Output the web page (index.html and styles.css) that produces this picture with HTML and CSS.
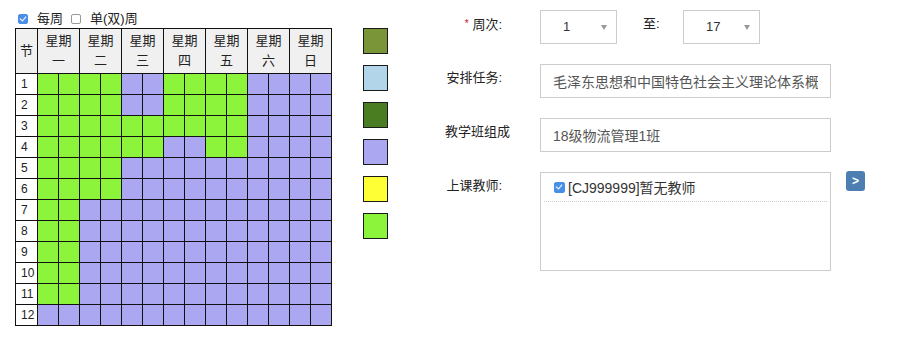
FILE: index.html
```html
<!DOCTYPE html>
<html lang="zh-CN">
<head>
    <meta charset="UTF-8">
    <title>排课</title>
    <link rel="stylesheet" href="styles.css">
</head>
<body>
<div class="page">
    <!-- 课表 -->
    <div class="left">
        <div class="week-opts">
            <span class="chk on"></span><span class="opt">每周</span>
            <span class="chk"></span><span class="opt">单(双)周</span>
        </div>
        <div class="grid">
            <div class="hd jie">节</div>
            <div class="hd day">星期<br>一</div>
            <div class="hd day">星期<br>二</div>
            <div class="hd day">星期<br>三</div>
            <div class="hd day">星期<br>四</div>
            <div class="hd day">星期<br>五</div>
            <div class="hd day">星期<br>六</div>
            <div class="hd day">星期<br>日</div>

            <div class="n">1</div><div class="g"></div><div class="g"></div><div class="g"></div><div class="g"></div><div class="p"></div><div class="p"></div><div class="g"></div><div class="g"></div><div class="g"></div><div class="g"></div><div class="p"></div><div class="p"></div><div class="p"></div><div class="p"></div>
            <div class="n">2</div><div class="g"></div><div class="g"></div><div class="g"></div><div class="g"></div><div class="p"></div><div class="p"></div><div class="g"></div><div class="g"></div><div class="g"></div><div class="g"></div><div class="p"></div><div class="p"></div><div class="p"></div><div class="p"></div>
            <div class="n">3</div><div class="g"></div><div class="g"></div><div class="g"></div><div class="g"></div><div class="g"></div><div class="g"></div><div class="g"></div><div class="g"></div><div class="g"></div><div class="g"></div><div class="p"></div><div class="p"></div><div class="p"></div><div class="p"></div>
            <div class="n">4</div><div class="g"></div><div class="g"></div><div class="g"></div><div class="g"></div><div class="g"></div><div class="g"></div><div class="p"></div><div class="p"></div><div class="g"></div><div class="g"></div><div class="p"></div><div class="p"></div><div class="p"></div><div class="p"></div>
            <div class="n">5</div><div class="g"></div><div class="g"></div><div class="g"></div><div class="g"></div><div class="p"></div><div class="p"></div><div class="p"></div><div class="p"></div><div class="p"></div><div class="p"></div><div class="p"></div><div class="p"></div><div class="p"></div><div class="p"></div>
            <div class="n">6</div><div class="g"></div><div class="g"></div><div class="g"></div><div class="g"></div><div class="p"></div><div class="p"></div><div class="p"></div><div class="p"></div><div class="p"></div><div class="p"></div><div class="p"></div><div class="p"></div><div class="p"></div><div class="p"></div>
            <div class="n">7</div><div class="g"></div><div class="g"></div><div class="p"></div><div class="p"></div><div class="p"></div><div class="p"></div><div class="p"></div><div class="p"></div><div class="p"></div><div class="p"></div><div class="p"></div><div class="p"></div><div class="p"></div><div class="p"></div>
            <div class="n">8</div><div class="g"></div><div class="g"></div><div class="p"></div><div class="p"></div><div class="p"></div><div class="p"></div><div class="p"></div><div class="p"></div><div class="p"></div><div class="p"></div><div class="p"></div><div class="p"></div><div class="p"></div><div class="p"></div>
            <div class="n">9</div><div class="g"></div><div class="g"></div><div class="p"></div><div class="p"></div><div class="p"></div><div class="p"></div><div class="p"></div><div class="p"></div><div class="p"></div><div class="p"></div><div class="p"></div><div class="p"></div><div class="p"></div><div class="p"></div>
            <div class="n">10</div><div class="g"></div><div class="g"></div><div class="p"></div><div class="p"></div><div class="p"></div><div class="p"></div><div class="p"></div><div class="p"></div><div class="p"></div><div class="p"></div><div class="p"></div><div class="p"></div><div class="p"></div><div class="p"></div>
            <div class="n">11</div><div class="g"></div><div class="g"></div><div class="p"></div><div class="p"></div><div class="p"></div><div class="p"></div><div class="p"></div><div class="p"></div><div class="p"></div><div class="p"></div><div class="p"></div><div class="p"></div><div class="p"></div><div class="p"></div>
            <div class="n">12</div><div class="p"></div><div class="p"></div><div class="p"></div><div class="p"></div><div class="p"></div><div class="p"></div><div class="p"></div><div class="p"></div><div class="p"></div><div class="p"></div><div class="p"></div><div class="p"></div><div class="p"></div><div class="p"></div>
        </div>
    </div>

    <!-- 图例 -->
    <div class="legend">
        <div class="sw olive"></div>
        <div class="sw sky"></div>
        <div class="sw forest"></div>
        <div class="sw lav"></div>
        <div class="sw yellow"></div>
        <div class="sw lime"></div>
    </div>

    <!-- 表单 -->
    <div class="form">
        <div class="row">
            <label class="lbl"><span class="req">*</span> 周次:</label>
            <div class="ctrl weeks">
                <div class="select"><span>1</span></div>
                <span class="to">至:</span>
                <div class="select"><span>17</span></div>
            </div>
        </div>
        <div class="row">
            <label class="lbl">安排任务:</label>
            <input class="ctrl input" type="text" value="毛泽东思想和中国特色社会主义理论体系概论" readonly>
        </div>
        <div class="row">
            <label class="lbl">教学班组成</label>
            <input class="ctrl input" type="text" value="18级物流管理1班" readonly>
        </div>
        <div class="row">
            <label class="lbl">上课教师:</label>
            <div class="ctrl teachers">
                <div class="teacher"><span class="chk on"></span>[CJ999999]暂无教师</div>
            </div>
            <button class="add" type="button">&gt;</button>
        </div>
    </div>
</div>
</body>
</html>
```

FILE: styles.css
```css
body {
    margin: 0;
    font-family: "Helvetica Neue", Helvetica, "Liberation Sans", Arial, "Noto Sans CJK SC", sans-serif;
    font-size: 13px;
    color: #333;
    background-color: #fff;
}
.page {
    display: flex;
    align-items: flex-start;
}

/* checkboxes */
.chk {
    display: inline-block;
    box-sizing: border-box;
    width: 10px;
    height: 10px;
    border: 1px solid #999;
    border-radius: 2px;
    background-color: #fff;
    position: relative;
}
.chk.on {
    border-color: #4a8fe7;
    background-color: #4a8fe7;
}
.chk.on::after {
    content: "";
    position: absolute;
    left: 2px;
    top: 0px;
    width: 3px;
    height: 5px;
    border: solid #fff;
    border-width: 0 1.5px 1.5px 0;
    transform: rotate(40deg);
}

/* left part */
.left {
    padding: 10px 0 0 15px;
}
.week-opts {
    height: 18px;
    display: flex;
    align-items: center;
    padding-left: 3px;
    color: #222;
}
.week-opts .opt {
    margin: 0 8px 0 9px;
    line-height: 18px;
}

.grid {
    display: grid;
    grid-template-columns: 21px repeat(14, 20px);
    grid-template-rows: 44px repeat(12, 20px);
    gap: 1px;
    padding: 1px;
    background-color: #111;
    width: max-content;
}
.hd {
    background-color: #f0f0f0;
    display: flex;
    align-items: center;
    justify-content: center;
    text-align: center;
    line-height: 20px;
    color: #222;
}
.hd.day {
    grid-column: span 2;
}
.n {
    background-color: #fff;
    line-height: 20px;
    padding-left: 5px;
    color: #222;
    font-size: 12px;
    font-family: "Liberation Sans", Arial, sans-serif;
    overflow: hidden;
}
.g {
    background-color: #8cf53b;
}
.p {
    background-color: #aba7f1;
}

/* legend */
.legend {
    margin-left: 31px;
    padding-top: 28px;
    display: flex;
    flex-direction: column;
    gap: 11px;
}
.sw {
    box-sizing: border-box;
    width: 25px;
    height: 26px;
    border: 1px solid #1a1a1a;
}
.olive { background-color: #7a9537; }
.sky { background-color: #b3d5ea; }
.forest { background-color: #4a7d21; }
.lav { background-color: #aba7f1; }
.yellow { background-color: #ffff36; }
.lime { background-color: #8cf53b; }

/* form */
.form {
    margin-left: 57px;
    padding-top: 10px;
    display: flex;
    flex-direction: column;
    gap: 20px;
}
.row {
    display: flex;
    align-items: flex-start;
}
.lbl {
    width: 57px;
    margin-right: 38px;
    text-align: right;
    white-space: nowrap;
    line-height: 20px;
    padding-top: 4px;
    color: #222;
}
.req {
    color: #c8102e;
    font-size: 10px;
    vertical-align: 2px;
}
.weeks {
    display: flex;
    align-items: flex-start;
}
.select {
    box-sizing: border-box;
    width: 77px;
    height: 34px;
    border: 1px solid #ccc;
    padding-left: 22px;
    line-height: 32px;
    font-size: 13px;
    color: #333;
    position: relative;
}
.select::after {
    content: "";
    position: absolute;
    right: 9px;
    top: 14px;
    border-left: 3.5px solid transparent;
    border-right: 3.5px solid transparent;
    border-top: 5px solid #999;
}
.to {
    width: 22px;
    margin: 0 18px 0 26px;
    line-height: 20px;
    padding-top: 4px;
    color: #222;
}
.input {
    box-sizing: border-box;
    width: 291px;
    height: 34px;
    border: 1px solid #ccc;
    padding: 0 12px;
    font-family: inherit;
    font-size: 14px;
    color: #555;
    outline: none;
    margin: 0;
    background: #fff;
}
.teachers {
    box-sizing: border-box;
    width: 291px;
    height: 99px;
    border: 1px solid #ccc;
    padding: 0 3px;
}
.teacher {
    display: flex;
    align-items: center;
    height: 28px;
    padding-left: 10px;
    border-bottom: 1px dotted #ccc;
    font-size: 14px;
    color: #333;
}
.teacher .chk {
    width: 11px;
    height: 11px;
    margin-right: 3px;
}
.add {
    margin-left: 15px;
    margin-top: -1px;
    width: 19px;
    height: 20px;
    padding: 0;
    border: none;
    border-radius: 3px;
    background-color: #4d7eb2;
    color: #fff;
    font-weight: bold;
    font-size: 12px;
    font-family: "Liberation Sans", Arial, sans-serif;
    cursor: pointer;
}
```
